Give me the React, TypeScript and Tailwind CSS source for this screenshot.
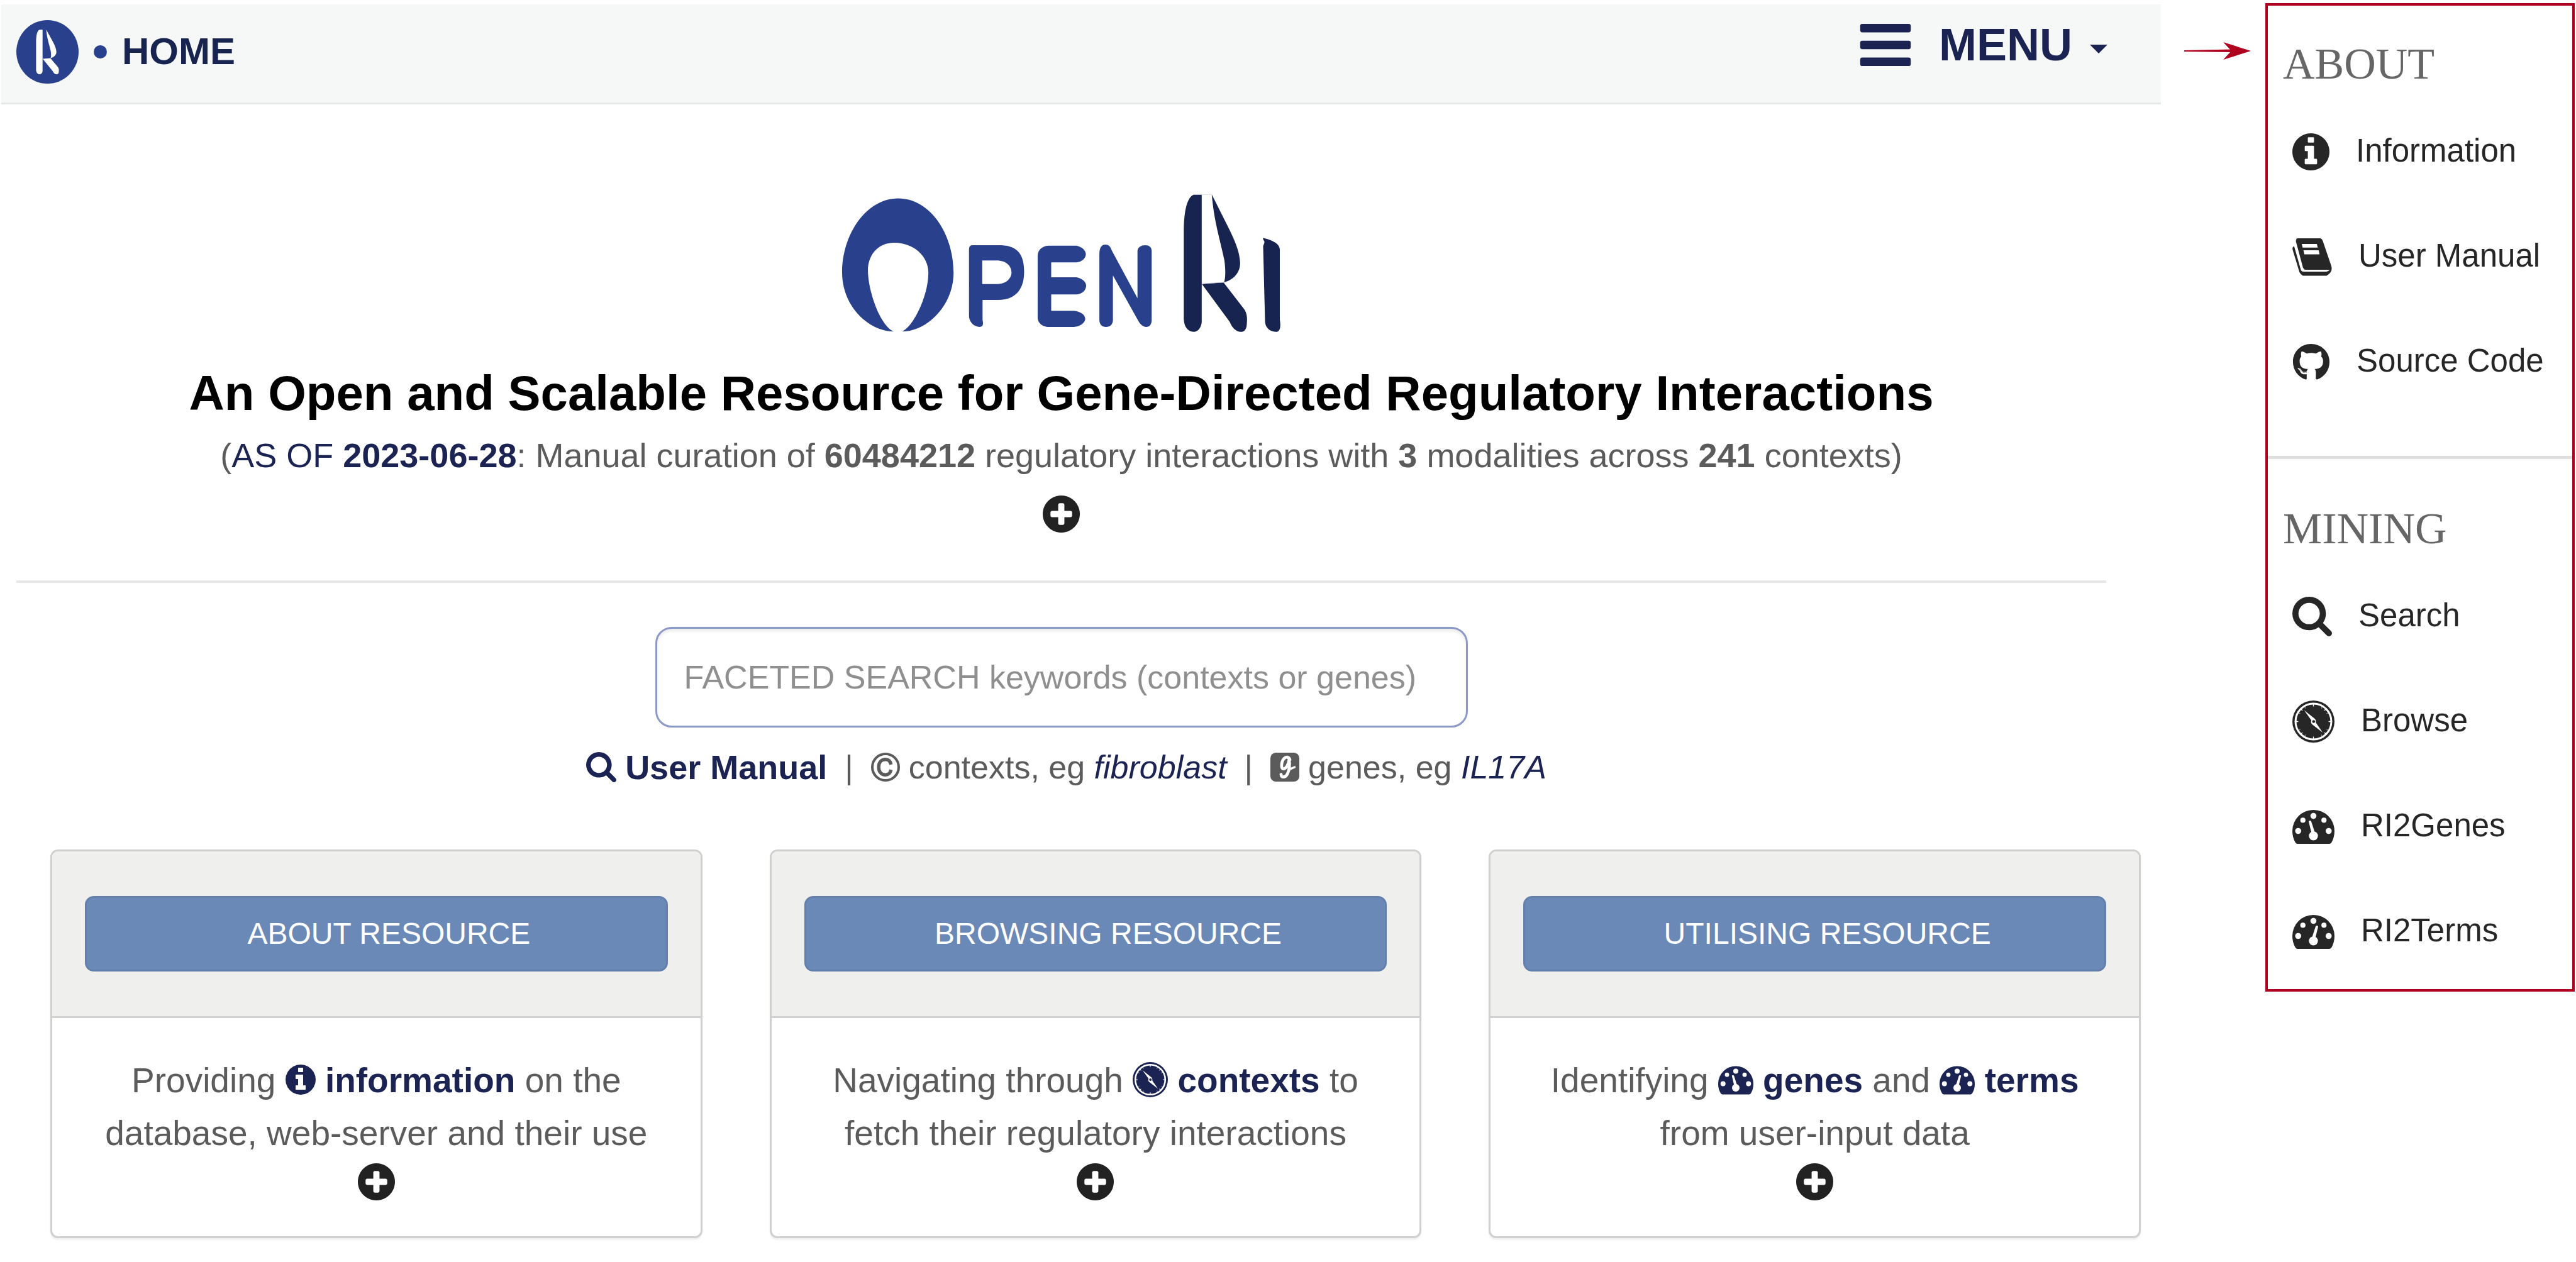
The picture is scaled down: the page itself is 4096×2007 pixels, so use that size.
import React from "react";
import { FaGithub } from "react-icons/fa";

type IconProps = { className?: string };

function InfoIcon({ className = "" }: IconProps) {
  return (
    <svg viewBox="128 128 1536 1536" fill="currentColor" aria-hidden="true" className={className}>
      <path d="M1152 1376v-160q0-14-9-23t-23-9h-96v-512q0-14-9-23t-23-9h-320q-14 0-23 9t-9 23v160q0 14 9 23t23 9h96v320h-96q-14 0-23 9t-9 23v160q0 14 9 23t23 9h448q14 0 23-9t9-23zm-128-896v-160q0-14-9-23t-23-9h-192q-14 0-23 9t-9 23v160q0 14 9 23t23 9h192q14 0 23-9t9-23zm640 416q0 209-103 385.5t-279.5 279.5-385.5 103-385.5-103-279.5-279.5-103-385.5 103-385.5 279.5-279.5 385.5-103 385.5 103 279.5 279.5 103 385.5z" />
    </svg>
  );
}

function PlusIcon({ className = "" }: IconProps) {
  return (
    <svg viewBox="128 128 1536 1536" fill="currentColor" aria-hidden="true" className={className}>
      <path d="M1344 960v-128q0-26-19-45t-45-19h-256v-256q0-26-19-45t-45-19h-128q-26 0-45 19t-19 45v256h-256q-26 0-45 19t-19 45v128q0 26 19 45t45 19h256v256q0 26 19 45t45 19h128q26 0 45-19t19-45v-256h256q26 0 45-19t19-45zm320-64q0 209-103 385.5t-279.5 279.5-385.5 103-385.5-103-279.5-279.5-103-385.5 103-385.5 279.5-279.5 385.5-103 385.5 103 279.5 279.5 103 385.5z" />
    </svg>
  );
}

function SearchIcon({ className = "" }: IconProps) {
  return (
    <svg viewBox="64 128 1664 1664" fill="currentColor" aria-hidden="true" className={className}>
      <path d="M1216 832q0-185-131.500-316.500t-316.500-131.500-316.500 131.500-131.500 316.500 131.500 316.500 316.500 131.500 316.500-131.500 131.500-316.500zm512 832q0 52-38 90t-90 38q-54 0-90-38l-343-342q-179 124-399 124-143 0-273.500-55.500t-225-150-150-225-55.500-273.500 55.500-273.500 150-225 225-150 273.500-55.500 273.500 55.500 225 150 150 225 55.500 273.500q0 220-124 399l343 343q37 37 37 90z" />
    </svg>
  );
}

function BookIcon({ className = "" }: IconProps) {
  return (
    <svg viewBox="0 0 278 264" fill="currentColor" aria-hidden="true" className={className}>
      <path
        fillRule="evenodd"
        d="M36 0H196Q208 3 214 20L274 196Q280 222 268 238Q258 252 240 262H74Q58 254 50 238L1 76Q0 56 13 57L60 222Q65 233 78 234H238Q256 230 262 220H90Q78 218 74 204L25 22Q24 4 36 0ZM66 39L72 65H178L172 39ZM78 84L84 112H191L185 84Z"
      />
    </svg>
  );
}

function CompassIcon({ className = "" }: IconProps) {
  return (
    <svg viewBox="0 0 100 100" aria-hidden="true" className={className}>
      <circle cx="50" cy="50" r="50" fill="currentColor" />
      <circle cx="50" cy="50" r="42.500" fill="none" stroke="#fff" strokeWidth="4.500" />
      <g stroke="#fff" strokeWidth="2">
        <path d="M50 8v6M50 86v6M8 50h6M86 50h6M20 20l4 4M76 76l4 4M80 20l-4 4M24 76l-4 4" />
        <path d="M29 14l2 5M71 14l-2 5M14 29l5 2M14 71l5-2M86 29l-5 2M86 71l-5-2M29 86l2-5M71 86l-2-5" strokeWidth="1" />
      </g>
      <path d="M28 23L54 44Q57 48 56 53L72 76L46 56Q43 52 45 47Z" fill="#fff" />
      <circle cx="50.500" cy="50" r="3.500" fill="currentColor" />
    </svg>
  );
}

function GaugeIcon({ className = "", lean }: IconProps & { lean: "left" | "right" }) {
  return (
    <svg viewBox="0 0 98 79" aria-hidden="true" className={className}>
      <path
        d="M12 79Q9 79 7 76Q0 64 0 49A49 49 0 0 1 98 49Q98 64 91 76Q89 79 86 79Z"
        fill="currentColor"
      />
      <g fill="#fff">
        <circle cx="49" cy="14" r="7" />
        <circle cx="24.500" cy="24" r="6" />
        <circle cx="73.500" cy="24" r="6" />
        <circle cx="13.500" cy="49" r="7" />
        <circle cx="84.500" cy="49" r="7" />
        <circle cx="49" cy="60.500" r="10.500" />
        {lean === "left" ? <path d="M38 27Q41 23 44 27L53 55L45 56Z" /> : <path d="M60 27Q57 23 54 27L45 55L53 56Z" />}
      </g>
    </svg>
  );
}

function CopyrightIcon({ className = "" }: IconProps) {
  return (
    <svg viewBox="0 0 68 68" fill="none" stroke="currentColor" aria-hidden="true" className={className}>
      <circle cx="34" cy="34" r="31" strokeWidth="6" />
      <path d="M47 28C45 19 41 16 34 16C25 16 18 22 18 34S25 52 34 52C41 52 45 49 47 40" strokeWidth="8" />
    </svg>
  );
}

function GeneIcon({ className = "" }: IconProps) {
  return (
    <svg viewBox="0 0 68 68" aria-hidden="true" className={className}>
      <rect width="68" height="68" rx="13" fill="currentColor" />
      <g fill="none" stroke="#fff" strokeLinecap="round" strokeLinejoin="round" strokeWidth="7">
        <path d="M46 17C44 10 38 9 33 13C26 19 24 36 30 38C36 39 43 28 44 16C46 28 44 42 40 50C36 59 26 60 25 51" />
        <path d="M43 39C48 39 52 36 57 34" strokeWidth="5" />
      </g>
    </svg>
  );
}

function BarsIcon({ className = "" }: IconProps) {
  return (
    <svg viewBox="0 0 1536 1280" fill="currentColor" aria-hidden="true" className={className}>
      <rect width="1536" height="256" rx="64" />
      <rect y="512" width="1536" height="256" rx="64" />
      <rect y="1024" width="1536" height="256" rx="64" />
    </svg>
  );
}

function RibbonMark() {
  return (
    <>
      <path d="M1200 162H1226V1050C1225 1085 1215 1120 1200 1120C1182 1118 1170 1085 1169 1030V400C1170 270 1180 180 1200 162Z" />
      <path d="M1258 160L1290 300C1320 430 1347 540 1348 640C1348 700 1330 755 1297 774C1302 740 1302 690 1298 620C1285 480 1265 350 1258 160Z" />
      <path d="M1227 787L1295 774L1362 965C1372 1000 1370 1040 1369 1070C1368 1105 1360 1120 1350 1120C1335 1118 1322 1090 1315 1050Z" />
    </>
  );
}

function BrandCircle({ className = "" }: IconProps) {
  return (
    <svg viewBox="85 137 325 443" preserveAspectRatio="none" aria-hidden="true" className={className}>
      <ellipse cx="247.500" cy="358.500" rx="162.500" ry="221.500" fill="#29418c" />
      <g transform="translate(-504 151) scale(.592 .325)" fill="#fff">
        <RibbonMark />
      </g>
    </svg>
  );
}

function BrandLogo({ className = "" }: IconProps) {
  return (
    <svg viewBox="80 150 1400 975" preserveAspectRatio="none" aria-hidden="true" className={className}>
      <g fill="#29418c">
        <path d="M262 187C365 187 438 440 438 705C438 945 350 1117 275 1117C315 1070 358 860 358 705C358 590 310 497 250 497C195 497 166 590 166 690C166 830 205 1080 248 1117C170 1117 84 945 84 705C84 440 160 187 262 187Z" />
        <path d="M497 515H590C645 520 662 590 662 700C662 810 640 895 580 897H530V1035C533 1065 532 1085 520 1085C502 1083 487 1050 487 1005V545Q487 515 497 515ZM529 621V786H578C605 786 622 745 622 705C622 660 605 621 575 621Z" />
        <path d="M738 518H828C845 525 858 550 858 577C858 605 845 632 828 634H748V739H828C845 745 859 770 859 797C859 825 848 857 828 858H748V972H820C840 975 856 1000 856 1028C856 1055 840 1083 820 1085H735C718 1080 705 1055 705 1020V590C705 550 718 522 738 518Z" />
        <path d="M920 510C932 510 936 525 940 550L1022 885V555C1023 530 1032 515 1047 515C1060 515 1067 530 1067 555V1040C1066 1070 1060 1085 1050 1085C1038 1083 1030 1065 1024 1040L944 725V1040C943 1068 935 1085 922 1085C909 1085 902 1068 901 1040V570C902 530 908 510 920 510Z" />
      </g>
      <g fill="#182450">
        <RibbonMark />
        <path d="M1420 463C1450 480 1473 500 1474 545V1035C1477 1070 1477 1120 1462 1120C1440 1118 1427 1085 1427 1045L1421 520C1424 505 1428 490 1422 478Z" />
      </g>
      <path d="M1200 160H1258M1227 782L1297 774" stroke="#b9bdd2" strokeWidth="3" fill="none" />
    </svg>
  );
}

function MoreButton({ label }: { label: string }) {
  return (
    <button type="button" aria-label={label} className="block text-[#222]">
      <PlusIcon className="size-[59px]" />
    </button>
  );
}

function Card({ title, children }: { title: string; children: React.ReactNode }) {
  return (
    <section className="overflow-hidden rounded-[12px] border-3 border-[#d0d0cf] bg-white shadow-[0_3px_3px_rgba(0,0,0,0.06)]">
      <div className="border-b-3 border-[#d0d0cf] bg-[#efefed] px-[52px] py-[71px]">
        <button
          type="button"
          className="block h-30 w-full rounded-[14px] border-3 border-[#6280ab] bg-[#6b89b7] pl-10 text-[48px] leading-[60px] text-white"
        >
          {title}
        </button>
      </div>
      <div className="flex flex-col items-center gap-1.5 px-[52px] py-[57px]">
        <p className="text-center text-[55px] leading-[84px]">{children}</p>
        <MoreButton label={`More about ${title.toLowerCase()}`} />
      </div>
    </section>
  );
}

function CardLink({ icon, children }: { icon: React.ReactNode; children: string }) {
  return (
    <a href="#" className="font-bold whitespace-nowrap text-[#1a2351]">
      {icon} {children}
    </a>
  );
}

function MenuGroup({ title, items }: { title: string; items: { label: string; icon: React.ReactNode }[] }) {
  return (
    <section>
      <h2 className="mb-3.5 pl-6 font-['Liberation_Serif',serif] text-[70px] leading-[80px] text-[#666]">{title}</h2>
      <ul>
        {items.map((item) => (
          <li key={item.label}>
            <a href="#" className="flex h-[167px] items-center gap-[42px] pl-[39px] text-[51px] leading-[60px] text-[#262626]">
              <span className="mt-1">{item.icon}</span>
              {item.label}
            </a>
          </li>
        ))}
      </ul>
    </section>
  );
}

const aboutItems = [
  { label: "Information", icon: <InfoIcon className="size-[59px]" /> },
  { label: "User Manual", icon: <BookIcon className="h-[60px] w-[63px]" /> },
  { label: "Source Code", icon: <FaGithub className="size-[60px]" /> },
];

const miningItems = [
  { label: "Search", icon: <SearchIcon className="size-[63px]" /> },
  { label: "Browse", icon: <CompassIcon className="size-[67px]" /> },
  { label: "RI2Genes", icon: <GaugeIcon lean="left" className="h-[54px] w-[67px]" /> },
  { label: "RI2Terms", icon: <GaugeIcon lean="right" className="h-[54px] w-[67px]" /> },
];

export default function App() {
  return (
    <div className="flex min-h-screen items-start bg-white pr-0.5 font-['Liberation_Sans',Arial,sans-serif] text-[#5b5b5b]">
      <div className="min-w-0 flex-1">
        <header className="mt-[7px] ml-0.5 flex h-[159px] items-center justify-between border-b-3 border-[#e7e9e8] bg-[#f5f8f7] pr-[85px] pb-1.5 pl-6">
          <a href="#" className="flex items-center gap-6 text-[60px] leading-[70px] font-bold text-[#182450]">
            <BrandCircle className="h-[101px] w-[99px]" />
            <span className="size-[21px] rounded-full bg-[#29418c]" />
            HOME
          </a>
          <button type="button" className="flex h-32 items-center self-start text-[72px] leading-[84px] font-bold text-[#1a2351]">
            <BarsIcon className="mr-11 h-[67px] w-[82px]" />
            MENU
            <svg viewBox="0 0 28 14" fill="currentColor" aria-hidden="true" className="mt-3.5 ml-7 h-3.5 w-7">
              <path d="M0 0H28L14 14Z" />
            </svg>
          </button>
        </header>

        <main>
          <div className="flex flex-col items-center pt-[141px] pr-[87px] pl-[26px]">
            <BrandLogo className="h-[222px] w-[701px]" />
            <h1 className="mt-[51px] text-[78px] leading-[90px] font-bold text-black">
              An Open and Scalable Resource for Gene-Directed Regulatory Interactions
            </h1>
            <p className="mt-3 mb-[22px] text-[54px] leading-[84px]">
              (
              <a href="#" className="text-[#1a2351]">
                AS OF <b>2023-06-28</b>
              </a>
              : Manual curation of <b>60484212</b> regulatory interactions with <b>3</b> modalities across <b>241</b>{" "}
              contexts)
            </p>
            <MoreButton label="More about the resource" />
            <hr className="mt-[76px] h-1 w-full border-0 bg-[#e7e7e7]" />
            <input
              type="text"
              aria-label="Faceted search"
              placeholder="FACETED SEARCH keywords (contexts or genes)"
              className="mt-[70px] h-40 w-[1292px] rounded-[26px] border-3 border-[#8b9ac6] bg-white px-[43px] text-[52px] shadow-[inset_0_4px_4px_rgba(0,0,0,0.08)] outline-none placeholder:text-[#8f8f8f]"
            />
            <div className="mt-[27px] flex items-center gap-7 pl-4 text-[52px] leading-[72px]">
              <a href="#" className="flex items-center gap-3.5 text-[54px] font-bold text-[#1a2351]">
                <SearchIcon className="size-12" />
                User Manual
              </a>
              <span>|</span>
              <span className="flex items-center gap-3.5">
                <CopyrightIcon className="size-[46px]" />
                <span>
                  contexts, eg{" "}
                  <a href="#" className="text-[#1a2351] italic">
                    fibroblast
                  </a>
                </span>
              </span>
              <span>|</span>
              <span className="flex items-center gap-3.5">
                <GeneIcon className="size-[46px]" />
                <span>
                  genes, eg{" "}
                  <a href="#" className="text-[#1a2351] italic">
                    IL17A
                  </a>
                </span>
              </span>
            </div>
          </div>

          <div className="mt-[95px] grid grid-cols-3 gap-[107px] pr-8 pl-20">
            <Card title="ABOUT RESOURCE">
              <span className="block">
                Providing{" "}
                <CardLink icon={<InfoIcon className="inline-block size-12 align-[-4px]" />}>information</CardLink> on
                the
              </span>
              <span className="block">database, web-server and their use</span>
            </Card>
            <Card title="BROWSING RESOURCE">
              <span className="block">
                Navigating through{" "}
                <CardLink icon={<CompassIcon className="inline-block size-14 align-[-8px]" />}>contexts</CardLink> to
              </span>
              <span className="block">fetch their regulatory interactions</span>
            </Card>
            <Card title="UTILISING RESOURCE">
              <span className="block">
                Identifying{" "}
                <CardLink icon={<GaugeIcon lean="left" className="inline-block h-[46px] w-14 align-[-4px]" />}>
                  genes
                </CardLink>{" "}
                and{" "}
                <CardLink icon={<GaugeIcon lean="right" className="inline-block h-[46px] w-14 align-[-4px]" />}>
                  terms
                </CardLink>
              </span>
              <span className="block">from user-input data</span>
            </Card>
          </div>
        </main>
      </div>

      <div className="mt-[67px] flex w-[166px] shrink-0 justify-center pl-3.5">
        <svg viewBox="0 0 106 28" fill="#b00020" aria-hidden="true" className="h-7 w-[106px]">
          <path d="M0 13L76 11.500V16L0 15Z" />
          <path d="M106 14L62 28L75 14L62 0Z" />
        </svg>
      </div>

      <nav
        aria-label="Menu"
        className="mt-[5px] w-[492px] shrink-0 border-4 border-[#b00020] bg-white pt-[53px] pb-2.5"
      >
        <MenuGroup title="ABOUT" items={aboutItems} />
        <hr className="mt-[68px] mb-[71px] h-[5px] border-0 bg-[#dfdfdf]" />
        <MenuGroup title="MINING" items={miningItems} />
      </nav>
    </div>
  );
}
